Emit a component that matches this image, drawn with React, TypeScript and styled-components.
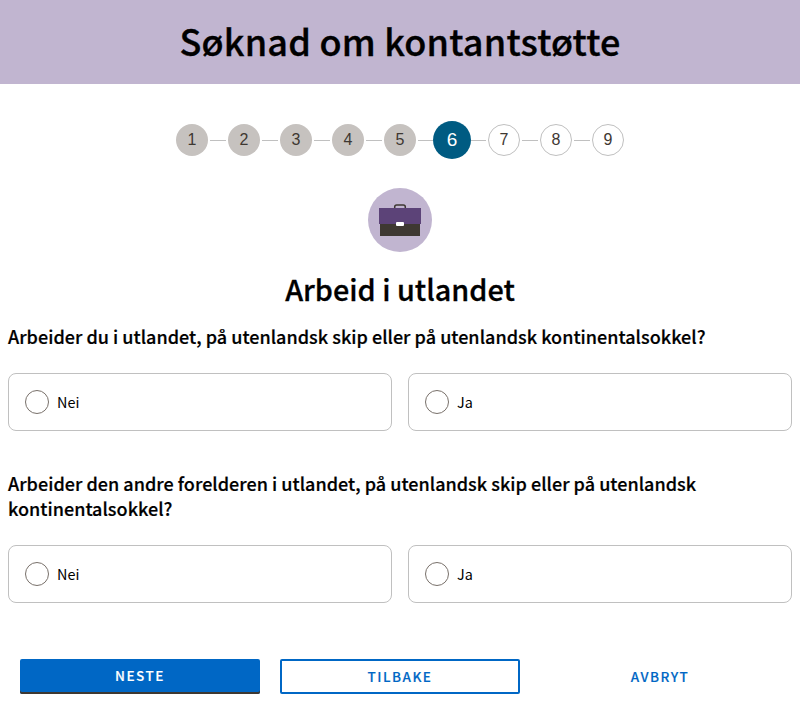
import React from 'react';
import styled, { createGlobalStyle } from 'styled-components';

const Global = createGlobalStyle`
  *, *::before, *::after { box-sizing: border-box; }
  body {
    margin: 0;
    background: #fff;
    color: #000;
    font: 14.4px/22px "Source Sans Pro", "Noto Sans CJK SC", "Noto Sans", sans-serif;
  }
`;

const Banner = styled.header`
  height: 84px;
  padding-bottom: 4px;
  background: #c1b5d0;
  display: flex;
  align-items: center;
  justify-content: center;
`;

const Title = styled.h1`
  margin: 0;
  font-size: 36px;
  line-height: 52px;
  font-weight: 500;
  letter-spacing: 0.2px;
  -webkit-text-stroke: 0.35px currentColor;
  white-space: nowrap;
`;

const Stepper = styled.ol`
  list-style: none;
  margin: 36px 0 0;
  padding: 0;
  height: 40px;
  display: flex;
  align-items: center;
  justify-content: center;
`;

const Step = styled.li`
  display: flex;
  align-items: center;
`;

type StepState = 'done' | 'active' | 'todo';

const Connector = styled.span<{ $width: number; $before: number; $after: number }>`
  width: ${(p) => p.$width}px;
  height: 1px;
  margin: 1px ${(p) => p.$after}px 0 ${(p) => p.$before}px;
  background: #c0c0c0;
`;

const StepCircle = styled.span<{ $state: StepState }>`
  width: ${(p) => (p.$state === 'active' ? 38 : 32)}px;
  height: ${(p) => (p.$state === 'active' ? 38 : 32)}px;
  border-radius: 50%;
  border: ${(p) => (p.$state === 'todo' ? '1px solid #c0c0c0' : '0')};
  background: ${(p) => ({ done: '#c6c2bf', active: '#005b82', todo: '#fff' })[p.$state]};
  color: ${(p) => (p.$state === 'active' ? '#fff' : '#3e3832')};
  font: ${(p) => (p.$state === 'active' ? 19 : 16)}px/1 "Liberation Sans", Arial, sans-serif;
  padding-bottom: ${(p) => (p.$state === 'active' ? 2 : 0)}px;
  display: flex;
  align-items: center;
  justify-content: center;
`;

const Main = styled.main`
  padding: 0 8px;
`;

const Emblem = styled.svg`
  display: block;
  width: 64px;
  height: 64px;
  margin: 28px auto 0;
`;

const Heading = styled.h2`
  margin: 17px 0 0;
  text-align: center;
  font-size: 28.8px;
  line-height: 40px;
  font-weight: 500;
  -webkit-text-stroke: 0.3px currentColor;
`;

const Question = styled.fieldset<{ $gap: number }>`
  border: 0;
  padding: 0;
  margin: ${(p) => p.$gap}px 0 0;
  min-width: 0;
`;

const Legend = styled.legend`
  padding: 0;
  margin: 0 0 24px;
  font-size: 18px;
  line-height: 25px;
  font-weight: 500;
  letter-spacing: 0.025px;
  -webkit-text-stroke: 0.2px currentColor;
`;

const Options = styled.div`
  display: grid;
  grid-template-columns: 1fr 1fr;
  gap: 16px;
`;

const Option = styled.label`
  height: 58px;
  border: 1px solid #c0c0c0;
  border-radius: 8px;
  padding: 0 16px;
  display: flex;
  align-items: center;
  gap: 8px;
`;

const Radio = styled.input`
  appearance: none;
  width: 24px;
  height: 24px;
  margin: 0;
  border: 1px solid #78706a;
  border-radius: 50%;
  background: #fff;
`;

const Actions = styled.div`
  margin: 56px 12px 0;
  display: grid;
  grid-template-columns: repeat(3, 240px);
  gap: 20px;
`;

const Button = styled.button<{ $kind: 'primary' | 'outline' | 'flat' }>`
  height: 35px;
  border-radius: 2px;
  border: ${(p) => (p.$kind === 'outline' ? '2px solid #0067c5' : '0')};
  background: ${(p) => (p.$kind === 'primary' ? '#0067c5' : 'transparent')};
  box-shadow: ${(p) => (p.$kind === 'primary' ? 'inset 0 -2px 0 #3e3832' : 'none')};
  color: ${(p) => (p.$kind === 'primary' ? '#fff' : '#0067c5')};
  padding: 0 0 ${(p) => (p.$kind === 'primary' ? 4 : 2)}px;
  font: 500 13.5px/20px "Source Sans Pro", "Noto Sans CJK SC", sans-serif;
  letter-spacing: 1.5px;
  -webkit-text-stroke: 0.15px currentColor;
  text-transform: uppercase;
`;

const CURRENT = 6;
const steps = [1, 2, 3, 4, 5, 6, 7, 8, 9];
const questions = [
  { name: 'soker', gap: 15, text: 'Arbeider du i utlandet, på utenlandsk skip eller på utenlandsk kontinentalsokkel?' },
  { name: 'forelder', gap: 40, text: 'Arbeider den andre forelderen i utlandet, på utenlandsk skip eller på utenlandsk kontinentalsokkel?' },
];

const stateOf = (n: number): StepState => (n < CURRENT ? 'done' : n === CURRENT ? 'active' : 'todo');

export default function App() {
  return (
    <>
      <Global />
      <Banner><Title>Søknad om kontantstøtte</Title></Banner>
      <Stepper>
        {steps.map((n) => (
          <Step key={n}>
            {n > 1 && (
              <Connector
                $width={n === CURRENT || n === CURRENT + 1 ? 15 : 16}
                $before={n === CURRENT + 1 ? 0 : 2}
                $after={n === CURRENT ? 0 : 2}
              />
            )}
            <StepCircle $state={stateOf(n)}>{n}</StepCircle>
          </Step>
        ))}
      </Stepper>
      <Main>
        <Emblem viewBox="0 0 64 64" aria-hidden="true">
          <circle cx="32" cy="32" r="32" fill="#c1b5d0" />
          <path d="M26.700 20v-1q0-2 2-2h6.600q2 0 2 2v1" fill="none" stroke="#3e3832" strokeWidth="1.500" />
          <rect x="12" y="35" width="40" height="13" fill="#3e3832" />
          <rect x="11" y="20" width="42" height="16" fill="#5c4378" />
          <rect x="28" y="34" width="8" height="4" rx="1" fill="#fff" />
        </Emblem>
        <Heading>Arbeid i utlandet</Heading>
        {questions.map((q) => (
          <Question key={q.name} $gap={q.gap}>
            <Legend>{q.text}</Legend>
            <Options>
              {['Nei', 'Ja'].map((answer) => (
                <Option key={answer}>
                  <Radio type="radio" name={q.name} />
                  <span>{answer}</span>
                </Option>
              ))}
            </Options>
          </Question>
        ))}
        <Actions>
          <Button $kind="primary">Neste</Button>
          <Button $kind="outline">Tilbake</Button>
          <Button $kind="flat">Avbryt</Button>
        </Actions>
      </Main>
    </>
  );
}
